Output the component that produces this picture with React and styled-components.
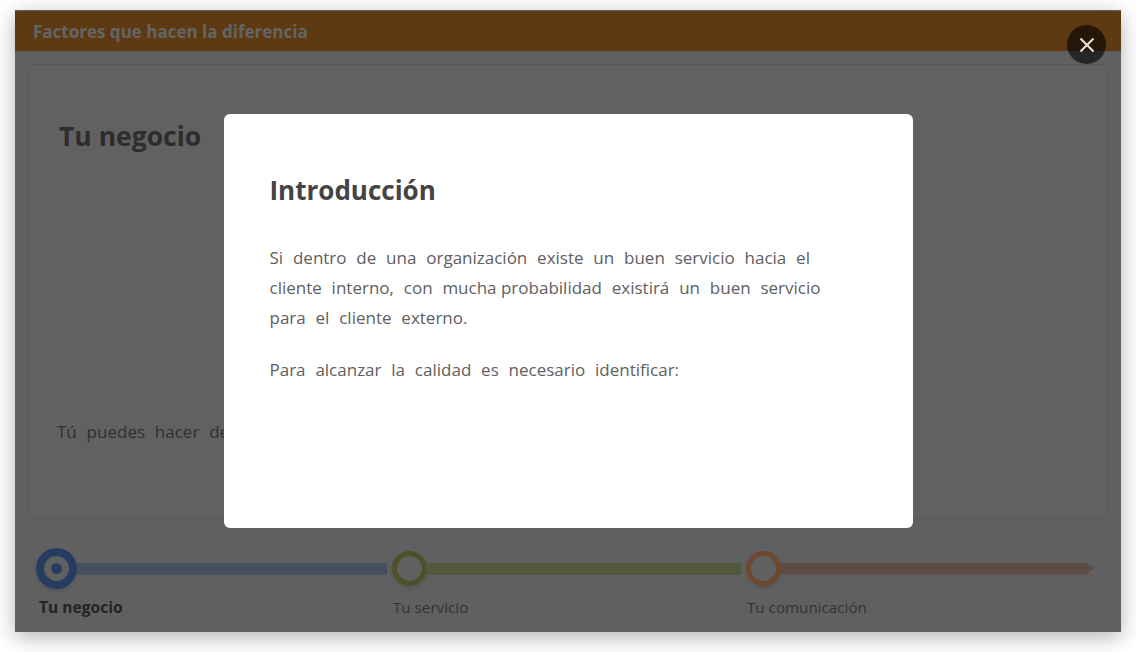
import React from "react";
import styled, { createGlobalStyle } from "styled-components";

const Global = createGlobalStyle`
  html, body {
    margin: 0;
    background: #fff;
  }
  * {
    box-sizing: border-box;
  }
`;

const Page = styled.div`
  width: 1136px;
  height: 652px;
  padding: 10px 15px 20px;
  font-family: "Open Sans", sans-serif;
  overflow: hidden;
`;

const Stage = styled.div`
  position: relative;
  height: 622px;
  display: flex;
  flex-direction: column;
  padding-top: 1px;
  background: #d6d6d6;
  box-shadow: 0 5px 20px rgba(0, 0, 0, 0.3);
  overflow: hidden;
`;

const Header = styled.header`
  height: 40px;
  flex: none;
  display: flex;
  align-items: center;
  padding-left: 18px;
  background: #d18128;
  color: #dedede;
  font-size: 17px;
  font-weight: 700;
`;

const Card = styled.section`
  height: 455px;
  margin: 13px 13px 0 12px;
  padding: 53px 29px 0;
  display: flex;
  flex-direction: column;
  background: #d8d8d8;
  border: 1px solid #c6c6c6;
  border-radius: 5px;
  overflow: hidden;
`;

const CardTitle = styled.h2`
  margin: 0 0 0 2px;
  font-size: 26.5px;
  line-height: 36px;
  font-weight: 700;
  color: #646464;
`;

const CardText = styled.p`
  margin: 263px 0 0;
  font-size: 17px;
  line-height: 30px;
  word-spacing: 5.4px;
  color: #6c6c6c;
`;

const Stepper = styled.nav`
  display: flex;
  margin: 29px 0 0 21px;
`;

const Step = styled.div`
  width: ${props => props.$width}px;
  flex: none;
`;

const Track = styled.div`
  height: 41px;
  display: flex;
  align-items: center;
`;

const Dot = styled.span`
  flex: none;
  margin-left: ${props => (props.$active ? 0 : "5px")};
  width: ${props => (props.$active ? 41 : 35)}px;
  height: ${props => (props.$active ? 41 : 35)}px;
  display: flex;
  align-items: center;
  justify-content: center;
  border: ${props => (props.$active ? 8 : 5)}px solid ${props => props.$color};
  border-radius: 50%;
  box-shadow: 0 2px 5px rgba(0, 0, 0, 0.15);
`;

const Pip = styled.span`
  width: 11px;
  height: 11px;
  border-radius: 50%;
  background: ${props => props.$color};
`;

const Bar = styled.span`
  flex: 1;
  height: 12px;
  background: ${props => props.$color};
  clip-path: ${props =>
    props.$arrow
      ? "polygon(0 0, calc(100% - 8px) 0, 100% 50%, calc(100% - 8px) 100%, 0 100%)"
      : "none"};
`;

const StepLabel = styled.div`
  margin: 8px 0 0 ${props => (props.$active ? "3px" : "6px")};
  font-size: ${props => (props.$active ? 15.6 : 15.2)}px;
  line-height: 20px;
  font-weight: ${props => (props.$active ? 700 : 400)};
  color: ${props => (props.$active ? "#4e4e4e" : "#707070")};
`;

const Overlay = styled.div`
  position: absolute;
  inset: 0;
  display: flex;
  align-items: center;
  justify-content: center;
  background: rgba(0, 0, 0, 0.55);
`;

const Close = styled.button`
  position: absolute;
  top: 15px;
  right: 15px;
  width: 39px;
  height: 39px;
  padding: 0;
  display: flex;
  align-items: center;
  justify-content: center;
  border: 0;
  border-radius: 50%;
  background: rgba(0, 0, 0, 0.6);
`;

const Modal = styled.div`
  width: 689px;
  height: 414px;
  padding: 58px 46px 0;
  background: #fff;
  border-radius: 6px;
`;

const ModalTitle = styled.h1`
  margin: 0 0 35px;
  font-size: 26px;
  line-height: 36px;
  font-weight: 700;
  color: #444;
`;

const ModalText = styled.p`
  margin: 0 0 22px;
  font-size: 17px;
  line-height: 30px;
  word-spacing: 5.4px;
  color: #606060;
  white-space: nowrap;
`;

const Tight = styled.span`
  word-spacing: 0;
`;

const steps = [
  { label: "Tu negocio", color: "#97afd5", ring: "#5587da", width: 351, active: true },
  { label: "Tu servicio", color: "#b6c385", ring: "#a8b45a", width: 354 },
  { label: "Tu comunicación", color: "#cca993", ring: "#ef9f66", width: 353, arrow: true },
];

const App = () => (
  <Page>
    <Global />
    <Stage>
      <Header>Factores que hacen la diferencia</Header>
      <Card>
        <CardTitle>Tu negocio</CardTitle>
        <CardText>Tú puedes hacer de</CardText>
      </Card>
      <Stepper>
        {steps.map(step => (
          <Step key={step.label} $width={step.width}>
            <Track>
              <Dot $active={step.active} $color={step.ring}>
                {step.active && <Pip $color={step.ring} />}
              </Dot>
              <Bar $color={step.color} $arrow={step.arrow} />
            </Track>
            <StepLabel $active={step.active}>{step.label}</StepLabel>
          </Step>
        ))}
      </Stepper>
      <Overlay>
        <Modal>
          <ModalTitle>Introducción</ModalTitle>
          <ModalText>
            Si dentro de una organización existe un buen servicio hacia el
            <br />
            cliente interno, con <Tight>mucha probabilidad</Tight> existirá un buen servicio
            <br />
            para el cliente externo.
          </ModalText>
          <ModalText>Para alcanzar la calidad es necesario identificar:</ModalText>
        </Modal>
      </Overlay>
      <Close aria-label="Cerrar">
        <svg width="16" height="16" viewBox="0 0 16 16">
          <path d="M1.5 1.5 L14.5 14.5 M14.5 1.5 L1.5 14.5" stroke="#e4dfd6" strokeWidth="2.2" />
        </svg>
      </Close>
    </Stage>
  </Page>
);

export default App;
